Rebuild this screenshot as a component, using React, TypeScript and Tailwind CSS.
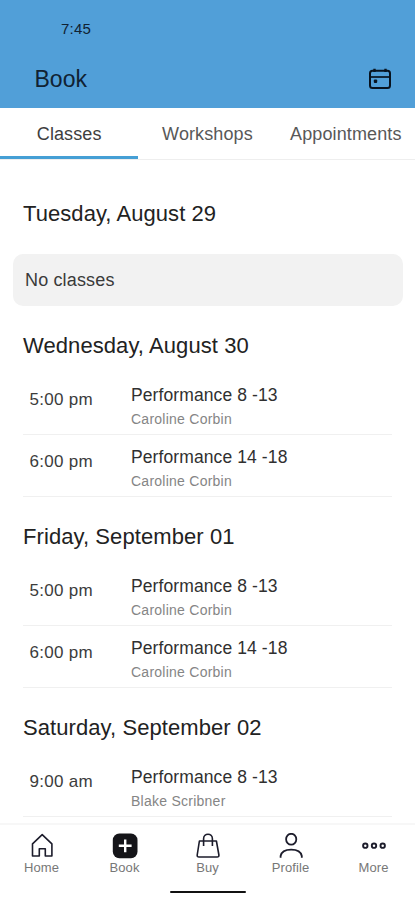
import { FC, ReactNode } from "react";

type ClassItem = { time: string; title: string; teacher: string };
type Day = { date: string; classes: ClassItem[] };

const TABS = ["Classes", "Workshops", "Appointments"];

const DAYS: Day[] = [
  {
    date: "Wednesday, August 30",
    classes: [
      { time: "5:00 pm", title: "Performance 8 -13", teacher: "Caroline Corbin" },
      { time: "6:00 pm", title: "Performance 14 -18", teacher: "Caroline Corbin" },
    ],
  },
  {
    date: "Friday, September 01",
    classes: [
      { time: "5:00 pm", title: "Performance 8 -13", teacher: "Caroline Corbin" },
      { time: "6:00 pm", title: "Performance 14 -18", teacher: "Caroline Corbin" },
    ],
  },
  {
    date: "Saturday, September 02",
    classes: [
      { time: "9:00 am", title: "Performance 8 -13", teacher: "Blake Scribner" },
    ],
  },
];

const CalendarIcon: FC = () => (
  <svg width="24" height="22" viewBox="0 0 24 22" fill="none" stroke="#08131f" strokeWidth="2">
    <rect x="2" y="2.8" width="20" height="17.2" rx="2.5" />
    <path d="M2 9H22" strokeWidth="1.7" />
    <path d="M6.5 0.8V4M17.5 0.8V4" strokeWidth="2.4" />
    <rect x="5.8" y="11.6" width="3.4" height="3.4" rx="1" fill="#08131f" stroke="none" />
  </svg>
);

const NavIcon: FC<{ children: ReactNode }> = ({ children }) => (
  <svg
    width="26"
    height="26"
    viewBox="0 0 26 26"
    fill="none"
    stroke="#1c1c2b"
    strokeWidth="1.6"
    strokeLinejoin="round"
  >
    {children}
  </svg>
);

const NAV = [
  {
    label: "Home",
    icon: (
      <NavIcon>
        <path d="M3.5 10.8L13.2 1.6L22.9 10.8V23H16.3V15.7H10.3V23H3.5Z" />
      </NavIcon>
    ),
  },
  {
    label: "Book",
    icon: (
      <NavIcon>
        <rect x="0.8" y="0.5" width="24.7" height="24.7" rx="6.5" fill="#151519" stroke="none" />
        <path d="M13.2 6.5V19.2M6.8 12.8H19.6" stroke="#fff" strokeWidth="2.4" />
      </NavIcon>
    ),
  },
  {
    label: "Buy",
    icon: (
      <NavIcon>
        <path d="M4.4 8H21.4L23.9 22Q24.1 24 22.1 24H4Q2 24 2.2 22Z" />
        <path d="M8.6 13V5.8C8.6 -0.2 17.4 -0.2 17.4 5.8V13" />
      </NavIcon>
    ),
  },
  {
    label: "Profile",
    icon: (
      <NavIcon>
        <ellipse cx="13.2" cy="6.2" rx="5.1" ry="5.4" strokeWidth="1.8" />
        <path d="M2.6 24.8V23C3.5 18.3 7.7 16.7 13.2 16.7S22.9 18.3 23.8 23V24.8" strokeWidth="1.8" />
      </NavIcon>
    ),
  },
  {
    label: "More",
    icon: (
      <NavIcon>
        <circle cx="4.3" cy="12.7" r="2.2" strokeWidth="1.9" />
        <circle cx="13" cy="12.7" r="2.2" strokeWidth="1.9" />
        <circle cx="21.7" cy="12.7" r="2.2" strokeWidth="1.9" />
      </NavIcon>
    ),
  },
];

const ClassRow: FC<ClassItem> = ({ time, title, teacher }) => (
  <div className="mx-[23px] flex h-[62px] border-b border-[#f0f0f0] pl-[6.5px]">
    <p className="w-[101.5px] pt-[15px] text-[17px] leading-6 tracking-[0.3px] text-[#3c3c3c]">
      {time}
    </p>
    <div className="pt-[10px]">
      <p className="text-[17.5px] leading-6 tracking-[0.1px] text-[#303030]">{title}</p>
      <p className="text-[14px] leading-6 tracking-[0.25px] text-[#858585]">{teacher}</p>
    </div>
  </div>
);

const App: FC = () => {
  return (
    <div className="flex h-[900px] w-[415px] flex-col overflow-hidden bg-white font-['Liberation_Sans',Arial,sans-serif]">
      {/* Header */}
      <header className="h-[108px] shrink-0 bg-[#519fd8] text-[#102233]">
        <p className="pl-[61px] pt-[19px] text-[15px] leading-5 tracking-[0.2px]">7:45</p>
        <div className="mt-[24px] flex h-8 items-center justify-between pl-[34.5px] pr-[23px]">
          <h1 className="text-[23px]">Book</h1>
          <CalendarIcon />
        </div>
      </header>

      {/* Tabs */}
      <nav className="grid h-[52px] shrink-0 grid-cols-3 border-b border-[#eeeeee]">
        {TABS.map((tab, i) => (
          <div
            key={tab}
            className={
              i === 0
                ? "h-[51px] border-b-[3px] border-[#459fd5] text-center text-[18px] leading-[52px] tracking-[0.1px] text-[#3e3e3e]"
                : "h-[51px] text-center text-[18px] leading-[52px] tracking-[0.12px] text-[#585858]"
            }
          >
            {tab}
          </div>
        ))}
      </nav>

      {/* Schedule */}
      <main className="min-h-0 flex-1 overflow-hidden">
        <h2 className="h-[94px] pl-[23px] pt-[40px] text-[22px] leading-7 tracking-[0.06px] text-[#222222]">
          Tuesday, August 29
        </h2>
        <div className="ml-[13px] mr-3 flex h-[52px] items-center rounded-[10px] bg-[#f2f2f2] pl-[12px] text-[18px] tracking-[0.15px] text-[#3a3a3a]">
          No classes
        </div>
        {DAYS.map((day) => (
          <section key={day.date}>
            <h2 className="h-[67px] pl-[23px] pt-[26px] text-[22px] leading-7 tracking-[0.08px] text-[#222222]">
              {day.date}
            </h2>
            {day.classes.map((item) => (
              <ClassRow key={item.time} {...item} />
            ))}
          </section>
        ))}
      </main>

      {/* Bottom nav */}
      <footer className="h-[77px] shrink-0 border-t-2 border-[#f7f7f7] bg-white">
        <div className="grid grid-cols-5 pt-[8px]">
          {NAV.map(({ label, icon }) => (
            <div key={label} className="flex flex-col items-center">
              {icon}
              <span className="text-[13px] leading-[18px] tracking-[0.1px] text-[#777777]">
                {label}
              </span>
            </div>
          ))}
        </div>
        <div className="mx-auto mt-[14px] h-[2px] w-[76px] rounded-full bg-[#111111]" />
      </footer>
    </div>
  );
};

export default App;
